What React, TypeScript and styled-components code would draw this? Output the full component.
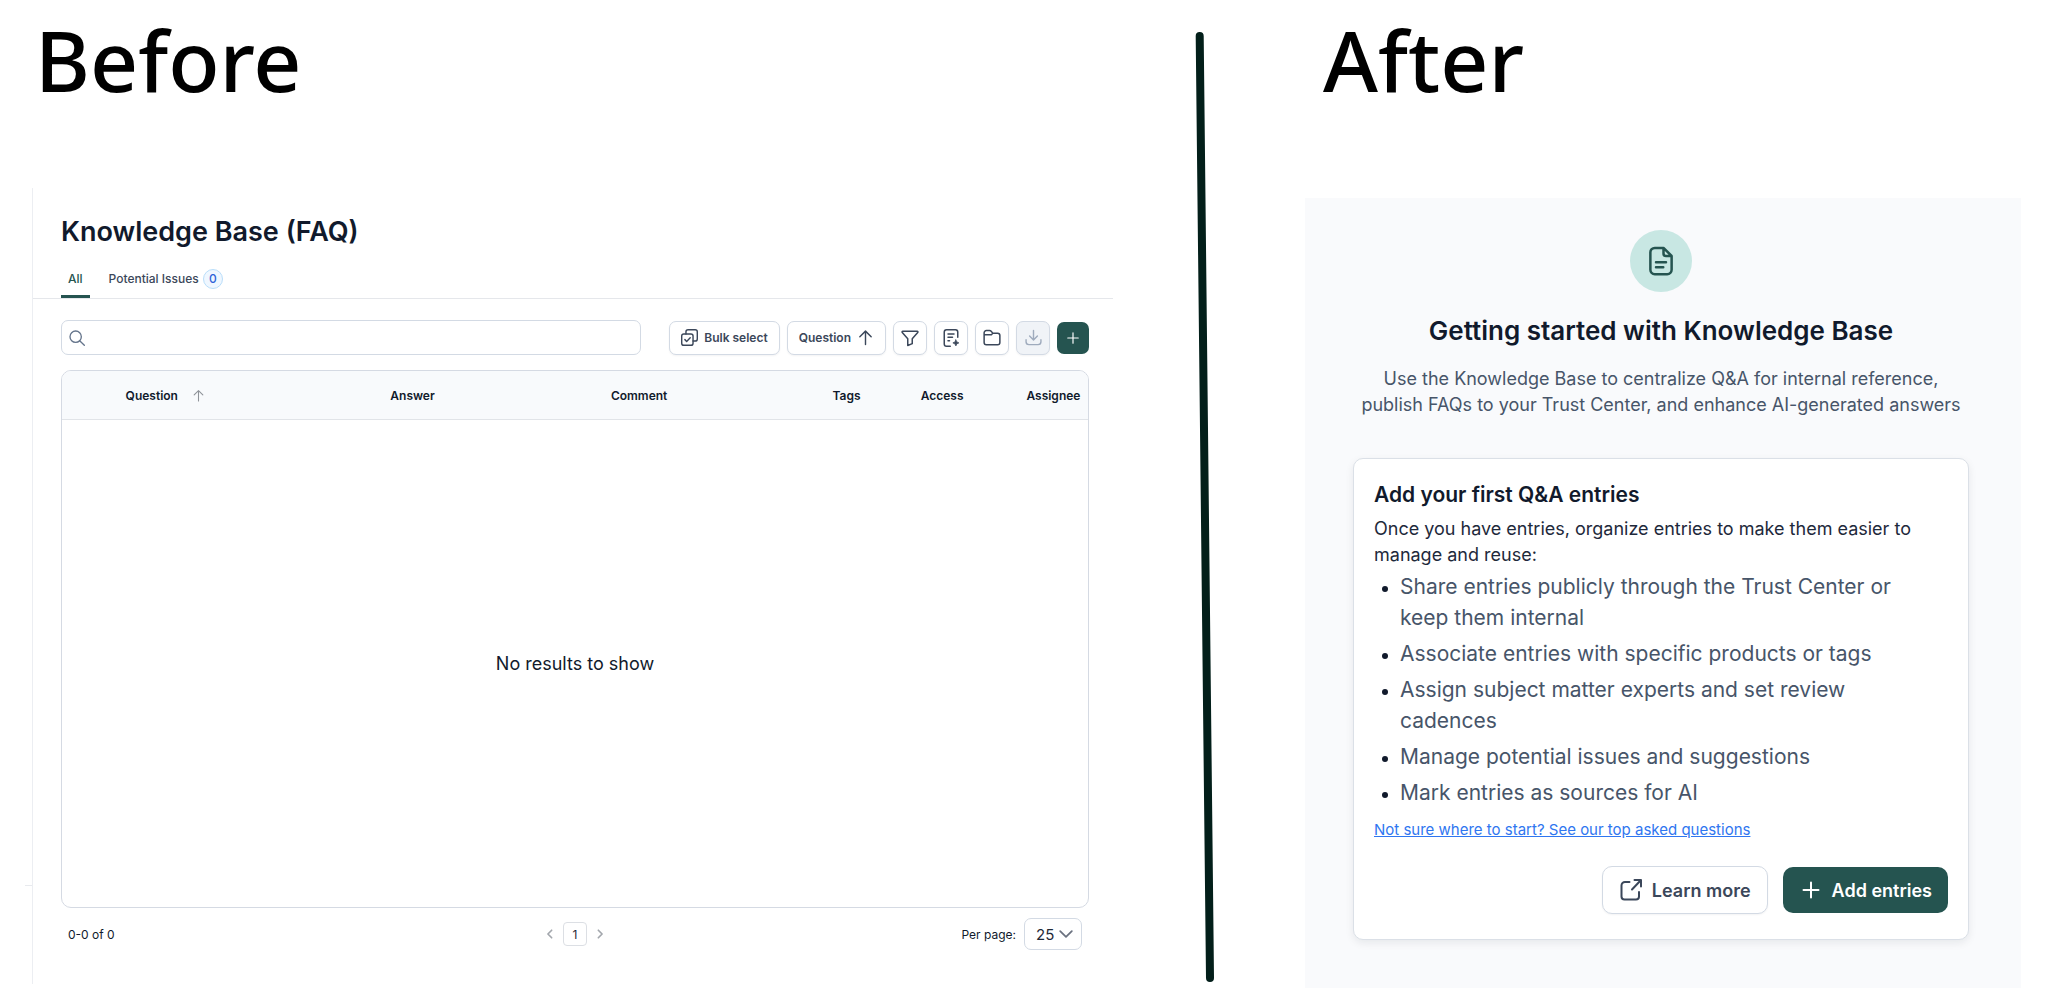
import React from "react";
import styled, { createGlobalStyle, css } from "styled-components";

const GlobalStyle = createGlobalStyle`
  *, *::before, *::after { box-sizing: border-box; }
  body {
    margin: 0;
    background: #ffffff;
    color: #111a2c;
    font-family: Inter, "Liberation Sans", sans-serif;
  }
  h1, h2, h3, p, ul { margin: 0; padding: 0; }
  button, input, select { font-family: inherit; }
`;

const Page = styled.main`
  display: grid;
  grid-template-columns: 1089fr 192fr 716fr;
  align-items: start;
  padding: 12px 27px 20px 24px;
`;

const Caption = styled.h1`
  font: 500 84px/96px "Noto Sans", "Open Sans", sans-serif;
  color: #000000;
  padding-left: ${(p: { $inset: number }) => p.$inset}px;
`;

const BeforePanel = styled.section`
  position: relative;
  margin: 80px 0 0 8px;
  padding: 26px 0 34px;
  border-left: 1px solid #eceef2;

  &::before {
    content: "";
    position: absolute;
    left: -8px;
    bottom: 98px;
    width: 7px;
    height: 1px;
    background: #e8eaee;
  }
`;

const Title = styled.h2`
  padding: 0 28px;
  font-size: 27px;
  line-height: 36px;
  font-weight: 600;
`;

const Tabs = styled.div`
  display: flex;
  gap: 12px;
  margin-top: 12px;
  padding: 0 28px;
  border-bottom: 1px solid #e5e7eb;
`;

const Tab = styled.button<{ $active?: boolean }>`
  display: flex;
  align-items: center;
  gap: 4px;
  height: 36px;
  padding: 0 7px;
  border: 0;
  border-bottom: 3px solid ${(p) => (p.$active ? "#255450" : "transparent")};
  background: none;
  color: ${(p) => (p.$active ? "#255450" : "#3b475a")};
  font-size: 12px;
  font-weight: 500;
`;

const Badge = styled.span`
  display: grid;
  place-items: center;
  width: 20px;
  height: 20px;
  border: 1px solid #b9defa;
  border-radius: 50%;
  background: #eff7ff;
  color: #2f63d8;
  font-size: 12px;
`;

const PanelBody = styled.div`
  padding: 21px 24px 0 28px;
`;

const Toolbar = styled.div`
  display: flex;
  align-items: center;
  gap: 28px;
  height: 35px;
  margin-bottom: 15px;
`;

const SearchBox = styled.label`
  display: flex;
  align-items: center;
  flex: 1;
  height: 35px;
  padding: 0 7px;
  border: 1px solid #d3dae4;
  border-radius: 7px;
  color: #64748b;
`;

const SearchInput = styled.input`
  flex: 1;
  min-width: 0;
  border: 0;
  outline: 0;
  background: none;
  font-size: 14px;
`;

const Actions = styled.div`
  display: flex;
  align-items: center;
  gap: 7px;
`;

const outlined = css`
  border: 1px solid #d3dae4;
  background: #ffffff;
  color: #3b475a;
  box-shadow: 0 1px 2px rgba(15, 23, 42, 0.05);
`;

const solid = css`
  border: 0;
  background: #255450;
  color: #ffffff;
`;

const ToolButton = styled.button`
  ${outlined}
  display: flex;
  align-items: center;
  gap: 6px;
  height: 34px;
  padding: 0 11px;
  border-radius: 7px;
  font-size: 12px;
  font-weight: 600;
`;

const IconButton = styled.button<{ $primary?: boolean }>`
  ${(p) => (p.$primary ? solid : outlined)}
  display: grid;
  place-items: center;
  width: ${(p) => (p.$primary ? 32 : 34)}px;
  height: ${(p) => (p.$primary ? 32 : 34)}px;
  padding: 0;
  border-radius: 7px;

  &:disabled {
    background: #f0f3f7;
    color: #9fabbd;
  }
`;

const TableFrame = styled.div`
  border: 1px solid #d5dae3;
  border-radius: 10px;
  overflow: hidden;
`;

const Table = styled.table`
  width: 100%;
  border-collapse: separate;
  border-spacing: 0;
  table-layout: fixed;
`;

const HeadCell = styled.th<{ $width?: string }>`
  width: ${(p) => p.$width ?? "auto"};
  height: 49px;
  padding: 0;
  border-bottom: 1px solid #e1e4e8;
  background: #f8fafc;
  font-size: 12px;
  font-weight: 600;
  text-align: left;
  white-space: nowrap;
`;

const SortLabel = styled.span`
  display: flex;
  align-items: center;
  gap: 14px;

  svg { color: #8f9399; }
`;

const EmptyCell = styled.td`
  height: 487px;
  padding: 0;
  font-size: 18px;
  text-align: center;
`;

const Footer = styled.div`
  display: grid;
  grid-template-columns: 1fr auto 1fr;
  align-items: center;
  margin-top: 10px;
  padding: 0 7px;
  font-size: 12px;
`;

const Pager = styled.nav`
  display: flex;
  align-items: center;
  gap: 8px;
`;

const Step = styled.button`
  display: grid;
  place-items: center;
  padding: 0;
  border: 0;
  background: none;
  color: #a3a7ad;
`;

const PageNumber = styled.button`
  width: 24px;
  height: 24px;
  padding: 0;
  border: 1px solid #dcdfe4;
  border-radius: 4px;
  background: #ffffff;
  color: #1f2937;
  font-size: 12px;
`;

const PerPage = styled.label`
  display: flex;
  align-items: center;
  justify-content: flex-end;
  gap: 8px;
`;

const SelectWrap = styled.span`
  display: grid;
  align-items: center;

  > * { grid-area: 1 / 1; }
  > svg { justify-self: end; margin-right: 9px; color: #6b7280; pointer-events: none; }
`;

const Select = styled.select`
  appearance: none;
  width: 58px;
  height: 32px;
  padding: 0 0 0 11px;
  border: 1px solid #d3dae4;
  border-radius: 7px;
  background: #ffffff;
  color: #1f2937;
  font-size: 15px;
`;

const Divider = styled.div`
  display: flex;
  justify-content: center;
  padding: 20px 8px 0 0;
`;

const AfterPanel = styled.section`
  display: flex;
  flex-direction: column;
  align-items: center;
  margin-top: 90px;
  padding: 32px 52px 48px 48px;
  background: #f9fafc;
`;

const IconDisc = styled.div`
  display: grid;
  place-items: center;
  width: 62px;
  height: 62px;
  border-radius: 50%;
  background: #c8e7e3;
  color: #255450;
`;

const Heading = styled.h2`
  margin-top: 23px;
  font-size: 26px;
  line-height: 32px;
  font-weight: 600;
  text-align: center;
`;

const Lead = styled.p`
  margin-top: 19px;
  color: #475569;
  font-size: 18px;
  line-height: 26px;
  text-align: center;
`;

const Card = styled.article`
  align-self: stretch;
  margin-top: 40px;
  padding: 22px 20px 25px;
  border: 1px solid #dbe0e7;
  border-radius: 10px;
  background: #ffffff;
  box-shadow: 0 3px 8px rgba(15, 23, 42, 0.08);
`;

const CardTitle = styled.h3`
  font-size: 21px;
  line-height: 28px;
  font-weight: 600;
`;

const CardText = styled.p`
  margin-top: 7px;
  color: #1e293b;
  font-size: 18px;
  line-height: 26px;
`;

const List = styled.ul`
  display: flex;
  flex-direction: column;
  gap: 5px;
  margin: 3px 0 12px;
  padding: 0 40px 0 26px;
  font-size: 21px;
  line-height: 31px;

  li::marker { font-size: 18px; }
`;

const ListText = styled.span`
  color: #475569;
`;

const HelpLink = styled.a`
  display: block;
  width: fit-content;
  color: #2f76f0;
  font-size: 15px;
  line-height: 20px;
`;

const CardActions = styled.div`
  display: flex;
  align-items: center;
  justify-content: flex-end;
  gap: 15px;
  margin-top: 26px;
`;

const CardButton = styled.button<{ $primary?: boolean }>`
  ${(p) => (p.$primary ? solid : outlined)}
  display: flex;
  align-items: center;
  gap: 9px;
  height: ${(p) => (p.$primary ? 46 : 48)}px;
  padding: 0 16px;
  border-radius: 10px;
  font-size: 18px;
  font-weight: 600;
`;

type IconProps = { size: number; weight?: number; children: React.ReactNode };

const Icon = ({ size, weight = 2, children }: IconProps) => (
  <svg
    width={size}
    height={size}
    viewBox="0 0 24 24"
    fill="none"
    stroke="currentColor"
    strokeWidth={weight}
    strokeLinecap="round"
    strokeLinejoin="round"
    aria-hidden="true"
  >
    {children}
  </svg>
);

const plus = <path d="M12 3v18M3 12h18" />;
const arrowUp = <path d="M12 22V3M4 11l8-8 8 8" />;

const benefits = [
  "Share entries publicly through the Trust Center or keep them internal",
  "Associate entries with specific products or tags",
  "Assign subject matter experts and set review cadences",
  "Manage potential issues and suggestions",
  "Mark entries as sources for AI",
];

const Before = () => (
  <div>
    <Caption $inset={11}>Before</Caption>
    <BeforePanel>
      <Title>Knowledge Base (FAQ)</Title>
      <Tabs>
        <Tab $active>All</Tab>
        <Tab>
          Potential Issues <Badge>0</Badge>
        </Tab>
      </Tabs>
      <PanelBody>
        <Toolbar>
          <SearchBox>
            <Icon size={16} weight={2}>
              <circle cx="10" cy="10" r="8.5" />
              <path d="M16 16l7 7" />
            </Icon>
            <SearchInput type="text" aria-label="Search" />
          </SearchBox>
          <Actions>
            <ToolButton>
              <Icon size={17} weight={2}>
                <rect x="1" y="7" width="16" height="16" rx="3" />
                <path d="M7 7V4a3 3 0 0 1 3-3h10a3 3 0 0 1 3 3v10a3 3 0 0 1-3 3h-3M5.500 15l2.500 2.500 5-5" />
              </Icon>
              Bulk select
            </ToolButton>
            <ToolButton>
              Question
              <Icon size={17} weight={2}>{arrowUp}</Icon>
            </ToolButton>
            <IconButton aria-label="Filter">
              <Icon size={18} weight={2}>
                <path d="M2.500 3h19a1 1 0 0 1 .8 1.700L15 13v6.500L9 22v-9L1.700 4.700A1 1 0 0 1 2.500 3z" />
              </Icon>
            </IconButton>
            <IconButton aria-label="Add from document">
              <Icon size={18} weight={2}>
                <path d="M21 11V4a3 3 0 0 0-3-3H6a3 3 0 0 0-3 3v16a3 3 0 0 0 3 3h5M8 6.500h8M8 11h6M8 15.500h2" />
                <path d="M18.500 14.500l1.300 2.700 2.700 1.300-2.700 1.300-1.300 2.700-1.300-2.700-2.700-1.300 2.700-1.300z" fill="currentColor" strokeWidth="1" />
              </Icon>
            </IconButton>
            <IconButton aria-label="Folders">
              <Icon size={18} weight={2}>
                <path d="M1.500 8V5a3 3 0 0 1 3-3h4.200a3 3 0 0 1 2.200 1L13 5.500h6.500a3 3 0 0 1 3 3V18a3 3 0 0 1-3 3h-15a3 3 0 0 1-3-3V8zM1.500 7.500h10L13 5.500" />
              </Icon>
            </IconButton>
            <IconButton aria-label="Download" disabled>
              <Icon size={17} weight={2}>
                <path d="M12 2v13M6.500 10l5.500 5.500 5.500-5.500M1.500 15v3a4 4 0 0 0 4 4h13a4 4 0 0 0 4-4v-3" />
              </Icon>
            </IconButton>
            <IconButton $primary aria-label="Add entry">
              <Icon size={14} weight={2}>{plus}</Icon>
            </IconButton>
          </Actions>
        </Toolbar>
        <TableFrame>
          <Table>
            <thead>
              <tr>
                <HeadCell $width="6.200%" />
                <HeadCell $width="25.800%">
                  <SortLabel>
                    Question
                    <Icon size={13} weight={2}>{arrowUp}</Icon>
                  </SortLabel>
                </HeadCell>
                <HeadCell $width="21.500%">Answer</HeadCell>
                <HeadCell $width="21.600%">Comment</HeadCell>
                <HeadCell $width="8.600%">Tags</HeadCell>
                <HeadCell $width="10.300%">Access</HeadCell>
                <HeadCell>Assignee</HeadCell>
              </tr>
            </thead>
            <tbody>
              <tr>
                <EmptyCell colSpan={7}>No results to show</EmptyCell>
              </tr>
            </tbody>
          </Table>
        </TableFrame>
        <Footer>
          <span>0-0 of 0</span>
          <Pager aria-label="Pages">
            <Step aria-label="Previous page">
              <Icon size={10} weight={4}><path d="M16 3l-9 9 9 9" /></Icon>
            </Step>
            <PageNumber>1</PageNumber>
            <Step aria-label="Next page">
              <Icon size={10} weight={4}><path d="M8 3l9 9-9 9" /></Icon>
            </Step>
          </Pager>
          <PerPage>
            Per page:
            <SelectWrap>
              <Select defaultValue="25">
                <option>25</option>
                <option>50</option>
                <option>100</option>
              </Select>
              <Icon size={14} weight={3}><path d="M2 7l10 10L22 7" /></Icon>
            </SelectWrap>
          </PerPage>
        </Footer>
      </PanelBody>
    </BeforePanel>
  </div>
);

const After = () => (
  <div>
    <Caption $inset={18}>After</Caption>
    <AfterPanel>
      <IconDisc>
        <Icon size={30} weight={2}>
          <path d="M14 1.500H7a3.500 3.500 0 0 0-3.500 3.500v14A3.500 3.500 0 0 0 7 22.500h10a3.500 3.500 0 0 0 3.500-3.500V8zM14 1.500V6a2 2 0 0 0 2 2h4.500M8 13h8M8 17h5.800" />
        </Icon>
      </IconDisc>
      <Heading>Getting started with Knowledge Base</Heading>
      <Lead>
        Use the Knowledge Base to centralize Q&amp;A for internal reference, publish FAQs to your
        Trust Center, and enhance AI-generated answers
      </Lead>
      <Card>
        <CardTitle>Add your first Q&amp;A entries</CardTitle>
        <CardText>
          Once you have entries, organize entries to make them easier to manage and reuse:
        </CardText>
        <List>
          {benefits.map((text) => (
            <li key={text}>
              <ListText>{text}</ListText>
            </li>
          ))}
        </List>
        <HelpLink href="#top-questions">Not sure where to start? See our top asked questions</HelpLink>
        <CardActions>
          <CardButton>
            <Icon size={24} weight={2}>
              <path d="M10.500 4H6a3.500 3.500 0 0 0-3.500 3.500v11A3 3 0 0 0 5.500 21.500h11.500a3 3 0 0 0 3-3V14M15.500 2h6.500v6.500M22 2l-9 9.500" />
            </Icon>
            Learn more
          </CardButton>
          <CardButton $primary>
            <Icon size={24} weight={2}><path d="M12 4.500v15M4.500 12h15" /></Icon>
            Add entries
          </CardButton>
        </CardActions>
      </Card>
    </AfterPanel>
  </div>
);

export default function App() {
  return (
    <>
      <GlobalStyle />
      <Page>
        <Before />
        <Divider>
          <svg width="20" height="950" viewBox="0 0 20 950" aria-hidden="true">
            <path d="M4.700 4L15 946" stroke="#031f1a" strokeWidth="8" strokeLinecap="round" />
          </svg>
        </Divider>
        <After />
      </Page>
    </>
  );
}
